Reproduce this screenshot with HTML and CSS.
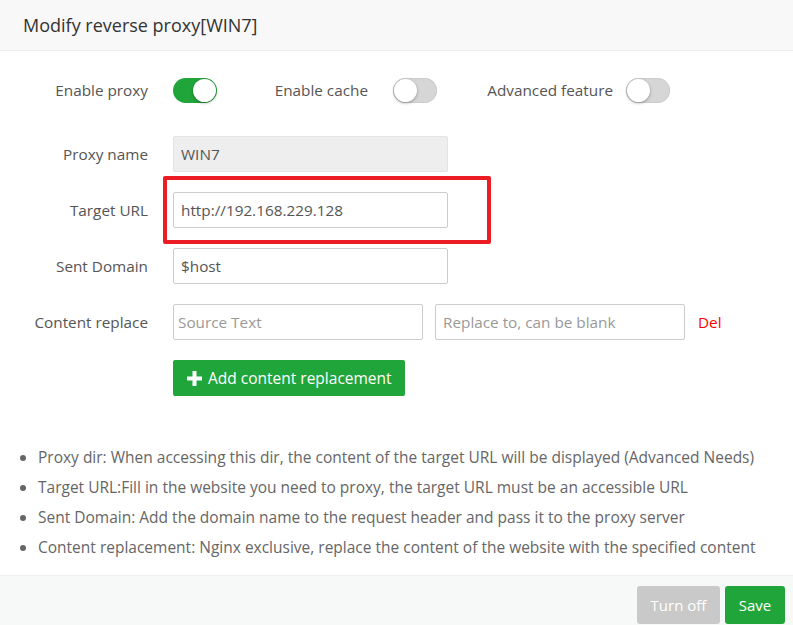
FILE: index.html
```html
<!DOCTYPE html>
<html>
<head>
<meta charset="utf-8">
<link rel="stylesheet" href="styles.css">
</head>
<body>
<div class="dialog">
  <div class="dlg-head">Modify reverse proxy[WIN7]</div>
  <div class="dlg-body">
    <div class="switch-row">
      <span class="sw-label sw-l1">Enable proxy</span>
      <span class="switch on"><span class="knob"></span></span>
      <span class="sw-label sw-l2">Enable cache</span>
      <span class="switch"><span class="knob"></span></span>
      <span class="sw-label sw-l3">Advanced feature</span>
      <span class="switch"><span class="knob"></span></span>
    </div>
    <div class="form-row">
      <label class="f-label">Proxy name</label>
      <div class="f-input disabled">WIN7</div>
    </div>
    <div class="form-row">
      <label class="f-label">Target URL</label>
      <div class="mark-wrap">
        <div class="f-input">http://192.168.229.128</div>
        <div class="red-mark"></div>
      </div>
    </div>
    <div class="form-row">
      <label class="f-label">Sent Domain</label>
      <div class="f-input">$host</div>
    </div>
    <div class="form-row">
      <label class="f-label">Content replace</label>
      <div class="f-input short placeholder">Source Text</div>
      <div class="f-input short placeholder second">Replace to, can be blank</div>
      <span class="del">Del</span>
    </div>
    <div class="btn-row">
      <button class="btn-add"><svg class="plus" width="15" height="15" viewBox="0 0 15 15"><rect x="5.5" y="0" width="4" height="15" fill="#fff"/><rect x="0" y="5.5" width="15" height="4" fill="#fff"/></svg>Add content replacement</button>
    </div>
    <ul class="tips">
      <li>Proxy dir: When accessing this dir, the content of the target URL will be displayed (Advanced Needs)</li>
      <li>Target URL:Fill in the website you need to proxy, the target URL must be an accessible URL</li>
      <li>Sent Domain: Add the domain name to the request header and pass it to the proxy server</li>
      <li>Content replacement: Nginx exclusive, replace the content of the website with the specified content</li>
    </ul>
  </div>
  <div class="dlg-foot">
    <button class="btn btn-gray">Turn off</button>
    <button class="btn btn-green">Save</button>
  </div>
</div>
</body>
</html>
```

FILE: styles.css
```css
* { box-sizing: border-box; }
html, body { margin: 0; padding: 0; background: #fff; }
body {
  font-family: "Open Sans", "Noto Sans", "Liberation Sans", sans-serif;
  font-size: 15.3px;
  color: #555;
}
.dialog {
  width: 793px;
  height: 625px;
  display: flex;
  flex-direction: column;
  overflow: hidden;
}
.dlg-head {
  height: 51px;
  flex: none;
  background: #f8f8f8;
  border-bottom: 1px solid #eee;
  padding-left: 23px;
  line-height: 50px;
  font-size: 18px;
  color: #333;
}
.dlg-body {
  flex: 1;
}
.switch-row {
  display: flex;
  align-items: center;
  height: 26px;
  margin-top: 26px;
}
.sw-label { text-align: right; white-space: nowrap; }
.sw-l1 { width: 148px; margin-right: 25px; }
.sw-l2 { width: 151px; margin-right: 25px; }
.sw-l3 { width: 176px; margin-right: 13px; }
.switch {
  position: relative;
  width: 44px;
  height: 25px;
  border-radius: 13px;
  background: #d6d6d6;
  box-shadow: inset 0 0 0 1px #ccc;
  flex: none;
}
.switch.on { background: #20a53a; box-shadow: none; }
.knob {
  position: absolute;
  top: 1px;
  left: 1px;
  width: 23px;
  height: 23px;
  border-radius: 50%;
  background: #fff;
  box-shadow: 0 1px 3px rgba(0,0,0,0.35);
}
.switch.on .knob { left: 20px; }
.form-row {
  display: flex;
  align-items: center;
  height: 36px;
  margin-top: 20px;
}
.switch-row + .form-row { margin-top: 33px; }
.f-label {
  width: 148px;
  margin-right: 25px;
  text-align: right;
  white-space: nowrap;
}
.f-input {
  width: 275px;
  height: 36px;
  border: 1px solid #ccc;
  border-radius: 2px;
  padding: 0 7px;
  line-height: 34px;
  color: #555;
  white-space: nowrap;
  overflow: hidden;
  background: #fff;
}
.f-input.disabled { background: #eee; border-color: #e3e3e3; }
.f-input.short { width: 250px; padding: 0 4px; }
.f-input.second { margin-left: 12px; padding: 0 7px; }
.f-input.placeholder { color: #999; }
.mark-wrap { position: relative; }
.red-mark {
  position: absolute;
  left: -10px;
  top: -16px;
  width: 328px;
  height: 68px;
  border: 4px solid #ec1c24;
  border-radius: 2px;
}
.del { color: #f00; margin-left: 13px; }
.btn-row {
  padding-left: 173px;
  margin-top: 20px;
}
.btn-add {
  display: flex;
  align-items: center;
  height: 36px;
  width: 232px;
  padding: 0 0 0 14px;
  border: none;
  border-radius: 2px;
  background: #20a53a;
  color: #fff;
  font-family: inherit;
  font-size: 15.5px;
  white-space: nowrap;
}
.plus { margin-right: 6px; flex: none; }
.tips {
  margin: 46px 0 0 0;
  padding: 0 0 0 38px;
  color: #666;
  font-size: 15.5px;
}
.tips li { line-height: 30px; white-space: nowrap; }
.dlg-foot {
  flex: none;
  height: 50px;
  border-top: 1px solid #eee;
  background: #f7f8f8;
  display: flex;
  justify-content: flex-end;
  padding: 10px 8px 0 0;
  gap: 5px;
}
.btn {
  height: 38px;
  border: none;
  border-radius: 3px;
  color: #fff;
  font-family: inherit;
  font-size: 15px;
  padding: 0;
}
.btn-gray { background: #c9c9c9; width: 83px; }
.btn-green { background: #20a53a; width: 60px; }
```
